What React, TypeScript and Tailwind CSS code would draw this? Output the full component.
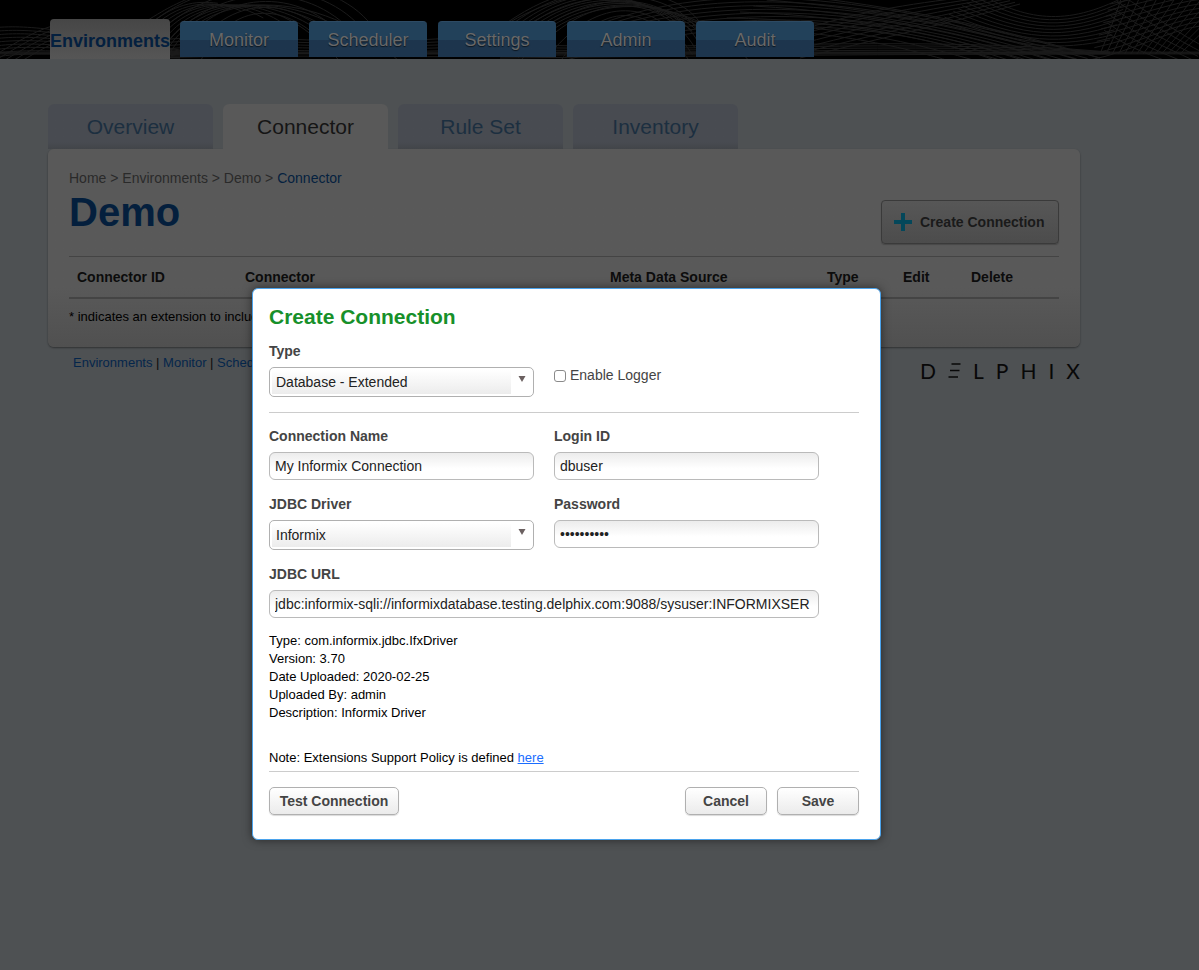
import { type ReactNode, useState } from "react";

const MAIN_TABS = ["Monitor", "Scheduler", "Settings", "Admin", "Audit"];

const COLUMNS = [
  { name: "Connector ID", width: "w-[168px]" },
  { name: "Connector", width: "w-[365px]" },
  { name: "Meta Data Source", width: "w-[217px]" },
  { name: "Type", width: "w-[76px]" },
  { name: "Edit", width: "w-[68px]" },
  { name: "Delete", width: "w-24" },
];

const DRIVER_INFO = [
  "Type: com.informix.jdbc.IfxDriver",
  "Version: 3.70",
  "Date Uploaded: 2020-02-25",
  "Uploaded By: admin",
  "Description: Informix Driver",
];

/* Blends two cubic curves into a family of strands. */
function strands(from: number[], to: number[], count: number) {
  return Array.from({ length: count }, (_, i) => {
    const t = i / (count - 1);
    const p = from.map((v, k) => (v + (to[k] - v) * t).toFixed(1));
    return `M${p[0]} ${p[1]}C${p[2]} ${p[3]} ${p[4]} ${p[5]} ${p[6]} ${p[7]}`;
  }).join("");
}

const MESH = [
  strands([-10, 28, 30, 24, 60, 30, 180, 50], [-10, 58, 30, 50, 80, 56, 180, 58], 9),
  strands([-10, 58, 20, 40, 40, 28, 60, 24], [20, 62, 40, 50, 60, 38, 90, 30], 5),
  strands([145, 22, 170, 6, 180, 2, 195, -4], [165, 62, 200, -14, 320, -14, 400, 62], 10),
  strands([150, 24, 215, -30, 330, -30, 372, 26], [200, 62, 230, 0, 290, -6, 340, 62], 6),
  strands([160, 40, 260, 30, 360, 54, 520, 30], [160, 58, 260, 54, 400, 58, 520, 56], 7),
  strands([505, 24, 560, -14, 590, -10, 620, -8], [520, 62, 570, -12, 690, -12, 750, 62], 10),
  strands([510, 22, 590, -24, 680, -14, 702, 26], [560, 62, 600, 0, 650, 0, 690, 62], 6),
  strands([600, 24, 720, -20, 860, -8, 1100, 58], [560, 62, 700, 20, 860, 10, 1000, 62], 9),
  strands([780, -6, 900, 6, 1000, 28, 1100, 58], [700, 30, 820, 26, 900, 46, 960, 64], 7),
  strands([800, 30, 880, 6, 930, 2, 990, -6], [800, 58, 900, 34, 960, 20, 1020, 4], 7),
  strands([980, -6, 1030, 22, 1070, 26, 1130, -6], [940, 20, 1020, 50, 1060, 50, 1110, 40], 10),
  strands([500, 44, 700, 52, 900, 34, 1110, 52], [500, 58, 700, 56, 900, 54, 1110, 54], 6),
  strands([1122, -4, 1116, 16, 1108, 34, 1100, 54], [1240, -4, 1220, 16, 1200, 34, 1180, 54], 14),
  strands([1110, 4, 1140, -2, 1170, -10, 1200, -14], [1090, 60, 1130, 52, 1170, 30, 1200, 26], 10),
  strands([1120, -6, 1150, 14, 1180, 34, 1210, 50], [1104, 30, 1130, 50, 1160, 58, 1180, 66], 6),
].join("");

function HeaderMesh() {
  return (
    <svg aria-hidden="true" className="absolute inset-0 h-full w-full" viewBox="0 0 1199 59" preserveAspectRatio="xMidYMid slice">
      <path d={MESH} fill="none" stroke="#1b1b1b" strokeWidth="1" />
      <path d="M0 53H1199" stroke="#1b1b1b" strokeWidth="3" opacity=".8" />
    </svg>
  );
}

function Field({ id, label, className = "", children }: { id: string; label: string; className?: string; children: ReactNode }) {
  return (
    <div className={`flex flex-col gap-1.5 ${className}`}>
      <label htmlFor={id} className="text-sm font-bold text-[#444]">
        {label}
      </label>
      {children}
    </div>
  );
}

function TextInput({ id, value, type = "text" }: { id: string; value: string; type?: string }) {
  const [text, setText] = useState(value);
  return (
    <input
      id={id}
      type={type}
      value={text}
      onChange={(e) => setText(e.target.value)}
      className="h-7 w-full rounded-md border border-[#bababa] bg-linear-to-b from-[#ececec] to-white to-60% px-[5px] text-sm text-[#222] outline-none"
    />
  );
}

function SelectBox({ id, options }: { id: string; options: string[] }) {
  return (
    <div className="relative">
      <select
        id={id}
        className="h-[30px] w-full appearance-none rounded-[5px] border border-[#b0b0b0] bg-white bg-linear-to-b from-white to-[#ececec] bg-size-[239px_24px] bg-position-[2px_2px] bg-no-repeat pr-8 pl-1.5 text-sm text-[#222] outline-none"
      >
        {options.map((o) => (
          <option key={o}>{o}</option>
        ))}
      </select>
      <svg aria-hidden="true" className="pointer-events-none absolute top-[9px] right-2 h-1.5 w-2" viewBox="0 0 8 6">
        <path d="M.5 0h7L4 6z" fill="#6b6060" />
      </svg>
    </div>
  );
}

function DialogButton({ className = "", children }: { className?: string; children: ReactNode }) {
  return (
    <button
      type="button"
      className={`h-7 rounded-[5px] border border-[#b0b0b0] bg-linear-to-b from-white to-[#ebebeb] text-sm font-bold text-[#444] shadow-[0_1px_1px_rgba(0,0,0,0.15)] ${className}`}
    >
      {children}
    </button>
  );
}

function Logo() {
  return (
    <div role="img" aria-label="Delphix" className="flex h-6 w-40 items-center justify-between font-[Lato,sans-serif] text-[21px] leading-6 text-[#080808]">
      <span>D</span>
      <svg className="h-[15px] w-[13px]" viewBox="0 0 13 15" fill="none" stroke="#080808" strokeWidth="1.6">
        <path d="M3.500 1H12.500M2 7.500h9.500M.5 14h9.500" />
      </svg>
      <span>L</span>
      <span>P</span>
      <span>H</span>
      <span>I</span>
      <span>X</span>
    </div>
  );
}

function CreateConnectionDialog() {
  return (
    <div className="absolute inset-0 pt-72 pl-[252px]">
      <section
        role="dialog"
        aria-labelledby="dialog-title"
        className="w-full max-w-[629px] rounded-md border border-[#4ba3ec] bg-white px-4 pt-4 pb-6 shadow-[0_0_10px_rgba(0,0,0,0.5)]"
      >
        <div className="pr-[5px]">
          <h2 id="dialog-title" className="text-[21px] leading-6 font-bold text-[#17902a]">
            Create Connection
          </h2>
          <div className="mt-3 grid grid-cols-[265px_265px] gap-x-5 border-b border-[#ccc] pb-[15px]">
            <Field id="type" label="Type">
              <SelectBox id="type" options={["Database - Extended"]} />
            </Field>
            <label className="mt-6 flex items-center gap-1 self-start text-sm text-[#444]">
              <input type="checkbox" className="mt-0.5 h-3 w-3 appearance-none rounded-[3px] border border-[#8a8a8a] bg-white" />
              Enable Logger
            </label>
          </div>
          <div className="mt-[13px] grid grid-cols-[265px_265px] gap-x-5 gap-y-3.5">
            <Field id="name" label="Connection Name">
              <TextInput id="name" value="My Informix Connection" />
            </Field>
            <Field id="login" label="Login ID">
              <TextInput id="login" value="dbuser" />
            </Field>
            <Field id="driver" label="JDBC Driver">
              <SelectBox id="driver" options={["Informix"]} />
            </Field>
            <Field id="password" label="Password">
              <TextInput id="password" type="password" value="delphix123" />
            </Field>
            <Field id="url" label="JDBC URL" className="col-span-2">
              <TextInput id="url" value="jdbc:informix-sqli://informixdatabase.testing.delphix.com:9088/sysuser:INFORMIXSER" />
            </Field>
          </div>
          <div className="mt-3.5 text-[13px] leading-[18px] text-black">
            {DRIVER_INFO.map((line) => (
              <p key={line}>{line}</p>
            ))}
            <p className="mt-[27px] border-b border-[#ccc] pb-1">
              Note: Extensions Support Policy is defined{" "}
              <a href="#policy" className="text-[#1a6dff] underline">
                here
              </a>
            </p>
          </div>
          <div className="mt-[15px] flex gap-2.5">
            <DialogButton className="mr-auto w-[130px]">Test Connection</DialogButton>
            <DialogButton className="w-[82px]">Cancel</DialogButton>
            <DialogButton className="w-[82px]">Save</DialogButton>
          </div>
        </div>
      </section>
    </div>
  );
}

export default function App() {
  return (
    <div className="relative min-h-screen bg-[#4e5153] font-['Liberation_Sans',Arial,sans-serif]">
      <header className="relative h-[59px] overflow-hidden bg-black">
        <HeaderMesh />
        <nav className="relative flex h-full items-end gap-[11px] pl-[50px]">
          <a
            href="#environments"
            className="-mr-px flex h-10 w-[120px] items-center justify-center rounded-t bg-linear-to-b from-[#464646] to-[#565656] pt-1 text-lg font-bold text-[#04203f]"
          >
            Environments
          </a>
          {MAIN_TABS.map((tab) => (
            <a
              key={tab}
              href={`#${tab.toLowerCase()}`}
              className="mb-0.5 flex h-9 w-[118px] items-center justify-center rounded-t border-t border-[#2d4a63] bg-linear-to-b from-[#22415a] from-50% to-[#1d354d] to-50% text-lg text-[#686868] text-shadow-[0_1px_1px_rgba(0,0,0,0.6)]"
            >
              {tab}
            </a>
          ))}
        </nav>
      </header>

      <main className="pt-[45px] pl-12">
        <nav className="flex gap-2.5 text-[21px]">
          {["Overview", "Connector", "Rule Set", "Inventory"].map((tab) => (
            <a
              key={tab}
              href={`#${tab.toLowerCase().replace(" ", "-")}`}
              className={
                tab === "Connector"
                  ? "flex h-[45px] w-[165px] items-center justify-center rounded-t-md bg-[#595959] text-[#151515]"
                  : "flex h-[45px] w-[165px] items-center justify-center rounded-t-md bg-linear-to-b from-[#484b51] from-85% to-[#424549] text-[#1c2f40]"
              }
            >
              {tab}
            </a>
          ))}
        </nav>

        <section className="w-full max-w-[1032px] rounded-md bg-linear-to-b from-[#595959] from-70% to-[#505050] px-[21px] pt-[19px] pb-5 shadow-[0_1px_2px_rgba(0,0,0,0.4)]">
          <div className="flex items-start justify-between">
            <div>
              <p className="text-sm text-[#2a2a2a]">
                Home &gt; Environments &gt; Demo &gt;{" "}
                <a href="#connector" className="text-[#05213f]">
                  Connector
                </a>
              </p>
              <h1 className="text-[40px] leading-12 font-bold text-[#041f3d]">Demo</h1>
            </div>
            <button
              type="button"
              className="mt-8 flex h-11 w-[178px] items-center gap-2 rounded border border-[#3a3a3a] bg-linear-to-b from-[#575757] to-[#4c4c4c] pl-3 text-sm font-bold whitespace-nowrap text-[#1a1a1a] shadow-[0_1px_1px_rgba(0,0,0,0.2)]"
            >
              <svg aria-hidden="true" className="h-[18px] w-[18px] shrink-0" viewBox="0 0 18 18">
                <path d="M7 0h4v7h7v4h-7v7H7v-7H0V7h7z" fill="#04475a" />
              </svg>
              Create Connection
            </button>
          </div>

          <table className="mt-3 w-full table-fixed border-t border-b-2 border-t-[#444] border-b-[#444] text-left text-sm text-[#0c0c0c]">
            <thead>
              <tr>
                {COLUMNS.map((c) => (
                  <th key={c.name} className={`h-[41px] p-0 pl-2 font-bold ${c.width}`}>
                    {c.name}
                  </th>
                ))}
              </tr>
            </thead>
          </table>
          <p className="mt-2 text-[13px] leading-5 text-black">* indicates an extension to include</p>
        </section>

        <footer className="flex w-full max-w-[1032px] items-start justify-between pt-1.5">
          <p className="pl-[25px] text-[13px] leading-5 text-[#0c0c0c]">
            <a href="#environments" className="text-[#05264b]">Environments</a> |{" "}
            <a href="#monitor" className="text-[#05264b]">Monitor</a> |{" "}
            <a href="#scheduler" className="text-[#05264b]">Scheduler</a>
          </p>
          <div className="pt-1.5">
            <Logo />
          </div>
        </footer>
      </main>

      <CreateConnectionDialog />
    </div>
  );
}
